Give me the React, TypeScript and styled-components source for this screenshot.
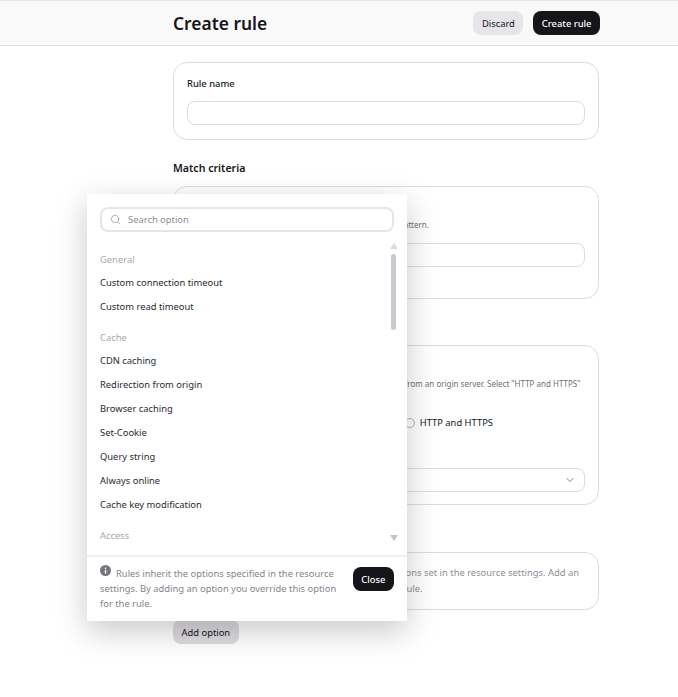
import React from 'react';
import styled, { createGlobalStyle } from 'styled-components';
import { ChevronDown, Search } from 'lucide-react';

const GlobalStyle = createGlobalStyle`
  html, body {
    margin: 0;
    padding: 0;
    background: #fff;
    font-family: "Noto Sans", "Open Sans", sans-serif;
    color: #16151a;
  }
  * { box-sizing: border-box; }
`;

const Page = styled.div`
  position: relative;
  width: 678px;
  height: 697px;
  overflow: hidden;
`;

const Header = styled.header`
  height: 46px;
  background: #f9f9f9;
  border-top: 1px solid #e8e8e8;
  border-bottom: 1px solid #e0e0e0;
  padding: 0 78px 0 173px;
  display: flex;
  align-items: center;
  justify-content: space-between;
`;

const Title = styled.h1`
  margin: 0;
  font-size: 17.4px;
  font-weight: 600;
  line-height: 24px;
`;

const Actions = styled.div`
  display: flex;
  gap: 10px;
`;

const Button = styled.button<{ $primary?: boolean }>`
  height: 24px;
  padding: 0 8.5px;
  border: 0;
  border-radius: 8px;
  font-family: inherit;
  font-size: 9.4px;
  font-weight: ${p => (p.$primary ? 500 : 400)};
  background: ${p => (p.$primary ? '#16151a' : '#e6e5ea')};
  color: ${p => (p.$primary ? '#fff' : '#16151a')};
`;

const Content = styled.main`
  width: 426px;
  margin-left: 173px;
  padding-top: 16px;
  display: flex;
  flex-direction: column;
`;

const Card = styled.section<{ $height: number; $padding?: number }>`
  height: ${p => p.$height}px;
  border: 1px solid #dcdcdc;
  border-radius: 14px;
  padding: ${p => p.$padding ?? 14}px 13px;
`;

const SectionTitle = styled.h2<{ $top: number }>`
  margin: ${p => p.$top}px 0 10px;
  font-size: 10.6px;
  font-weight: 600;
  line-height: 16px;
`;

const Label = styled.div`
  font-size: 9.4px;
  font-weight: 500;
  line-height: 14px;
`;

const Hint = styled.div`
  margin-top: 3px;
  font-size: 8px;
  line-height: 14px;
  color: #6f6e77;
  white-space: nowrap;
`;

const Field = styled.div<{ $top: number }>`
  margin-top: ${p => p.$top}px;
  height: 24px;
  border: 1px solid #dcdcdc;
  border-radius: 8px;
  display: flex;
  align-items: center;
  justify-content: flex-end;
  padding-right: 8px;
  color: #55545c;
`;

const RadioRow = styled.div`
  margin-top: 25px;
  display: flex;
  align-items: center;
  justify-content: flex-end;
  gap: 5px;
  padding-right: 92px;
  font-size: 9.4px;
  line-height: 14px;
`;

const Radio = styled.span`
  width: 10px;
  height: 10px;
  border: 1px solid #b5b4bb;
  border-radius: 50%;
`;

const EmptyText = styled.div`
  font-size: 9.4px;
  line-height: 16px;
  color: #8f8e97;
  white-space: nowrap;
`;

const AddOption = styled(Button)`
  align-self: flex-start;
  margin-top: 10px;
  background: #dddce1;
`;

const Popover = styled.div`
  position: absolute;
  left: 87px;
  top: 194px;
  width: 320px;
  height: 427px;
  background: #fff;
  box-shadow: 0 10px 30px rgba(0, 0, 0, 0.22);
  display: flex;
  flex-direction: column;
`;

const SearchBox = styled.div`
  margin: 13px 13px 0;
  height: 25px;
  flex: none;
  border: 2px solid #e6e5ea;
  border-radius: 8px;
  display: flex;
  align-items: center;
  gap: 7px;
  padding-left: 8px;
  color: #8f8e97;
  font-size: 9.4px;
`;

const OptionList = styled.div`
  position: relative;
  flex: 1;
  overflow: hidden;
  padding: 15px 13px 0;
`;

const GroupLabel = styled.div`
  height: 24px;
  line-height: 26px;
  font-size: 9.4px;
  color: #a8a7af;
`;

const Group = styled.div`
  margin-bottom: 6px;
`;

const Option = styled.div`
  height: 24px;
  line-height: 24px;
  font-size: 9.4px;
  color: #2a2930;
  white-space: nowrap;
`;

const ScrollArrow = styled.span<{ $up?: boolean }>`
  position: absolute;
  left: 303px;
  ${p => (p.$up ? 'top: 11px;' : 'bottom: 14px;')}
  width: 0;
  height: 0;
  border-left: 4px solid transparent;
  border-right: 4px solid transparent;
  ${p => (p.$up ? 'border-bottom: 6px solid #dcdbe0;' : 'border-top: 6px solid #c4c3c9;')}
`;

const ScrollThumb = styled.span`
  position: absolute;
  left: 304px;
  top: 22px;
  width: 5px;
  height: 76px;
  border-radius: 3px;
  background: #c9c8ce;
`;

const PopoverFooter = styled.div`
  flex: none;
  height: 66px;
  border-top: 2px solid #efeff1;
  padding: 9px 13px 0;
  display: flex;
  justify-content: space-between;
  align-items: flex-start;
`;

const Note = styled.div`
  width: 240px;
  margin-top: -1px;
  font-size: 9.4px;
  line-height: 15px;
  color: #85848c;
`;

const CloseButton = styled(Button)`
  margin-top: 1px;
`;

const InfoIcon = styled.svg`
  width: 11px;
  height: 11px;
  margin-right: 5px;
  vertical-align: 1px;
`;

const groups = [
  { name: 'General', items: ['Custom connection timeout', 'Custom read timeout'] },
  {
    name: 'Cache',
    items: [
      'CDN caching',
      'Redirection from origin',
      'Browser caching',
      'Set-Cookie',
      'Query string',
      'Always online',
      'Cache key modification',
    ],
  },
  { name: 'Access', items: [] as string[] },
];

export default function App() {
  return (
    <>
      <GlobalStyle />
      <Page>
        <Header>
          <Title>Create rule</Title>
          <Actions>
            <Button>Discard</Button>
            <Button $primary>Create rule</Button>
          </Actions>
        </Header>
        <Content>
          <Card $height={78}>
            <Label>Rule name</Label>
            <Field $top={10} />
          </Card>
          <SectionTitle $top={20}>Match criteria</SectionTitle>
          <Card $height={113}>
            <Label>Path</Label>
            <Hint>Specify a path the rule applies to. Enter an exact path or pattern.</Hint>
            <Field $top={11} />
          </Card>
          <SectionTitle $top={20}>Protocol</SectionTitle>
          <Card $height={160}>
            <Label>Origin protocol</Label>
            <Hint>Choose the protocol that's used when requesting content from an origin server. Select "HTTP and HTTPS"</Hint>
            <RadioRow>
              <Radio />
              HTTP and HTTPS
            </RadioRow>
            <Field $top={38}>
              <ChevronDown size={12} strokeWidth={1.5} />
            </Field>
          </Card>
          <SectionTitle $top={21}>Options</SectionTitle>
          <Card $height={58} $padding={12}>
            <EmptyText>No options added yet. The rule uses all of the options set in the resource settings. Add an</EmptyText>
            <EmptyText>option to override a resource setting just for this rule.</EmptyText>
          </Card>
          <AddOption>Add option</AddOption>
        </Content>
        <Popover>
          <SearchBox>
            <Search size={11} strokeWidth={1.5} />
            Search option
          </SearchBox>
          <OptionList>
            {groups.map(group => (
              <Group key={group.name}>
                <GroupLabel>{group.name}</GroupLabel>
                {group.items.map(item => (
                  <Option key={item}>{item}</Option>
                ))}
              </Group>
            ))}
            <ScrollArrow $up />
            <ScrollThumb />
            <ScrollArrow />
          </OptionList>
          <PopoverFooter>
            <Note>
              <InfoIcon viewBox="0 0 16 16">
                <circle cx="8" cy="8" r="8" fill="#77767e" />
                <rect x="7" y="7" width="2" height="5.5" fill="#fff" />
                <circle cx="8" cy="4.7" r="1.2" fill="#fff" />
              </InfoIcon>
              Rules inherit the options specified in the resource settings. By adding an option you override this option for the rule.
            </Note>
            <CloseButton $primary>Close</CloseButton>
          </PopoverFooter>
        </Popover>
      </Page>
    </>
  );
}
